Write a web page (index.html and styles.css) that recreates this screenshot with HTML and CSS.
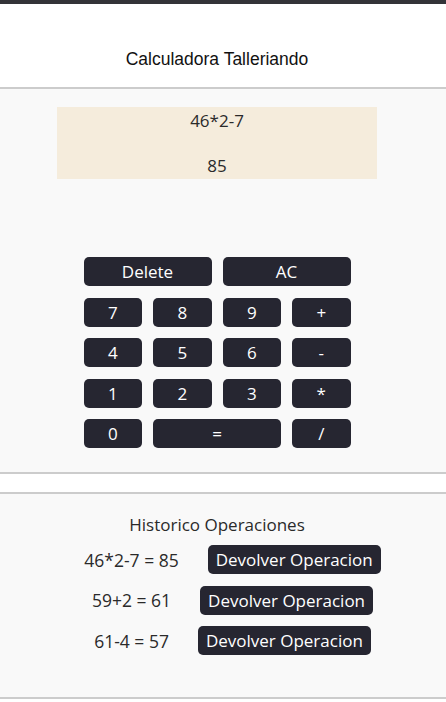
FILE: index.html
```html
<!DOCTYPE html>
<html lang="es">
<head>
<meta charset="utf-8">
<title>Calculadora Talleriando</title>
<link rel="stylesheet" href="styles.css">
</head>
<body>
<div class="topbar"></div>
<header class="header">
  <h1 class="title">Calculadora Talleriando</h1>
</header>
<section class="calc">
  <div class="inner">
    <div class="display">
      <div class="expr">46*2-7</div>
      <div class="result">85</div>
    </div>
    <div class="keypad">
      <button class="key span2">Delete</button>
      <button class="key span2">AC</button>
      <button class="key">7</button>
      <button class="key">8</button>
      <button class="key">9</button>
      <button class="key">+</button>
      <button class="key">4</button>
      <button class="key">5</button>
      <button class="key">6</button>
      <button class="key">-</button>
      <button class="key">1</button>
      <button class="key">2</button>
      <button class="key">3</button>
      <button class="key">*</button>
      <button class="key">0</button>
      <button class="key span2">=</button>
      <button class="key">/</button>
    </div>
  </div>
</section>
<div class="spacer"></div>
<section class="history">
  <div class="inner">
    <h2 class="hist-title">Historico Operaciones</h2>
    <div class="hist-list">
      <div class="hist-row"><span class="op">46*2-7 = 85</span><button class="back">Devolver Operacion</button></div>
      <div class="hist-row"><span class="op">59+2 = 61</span><button class="back">Devolver Operacion</button></div>
      <div class="hist-row"><span class="op">61-4 = 57</span><button class="back">Devolver Operacion</button></div>
    </div>
  </div>
</section>
</body>
</html>
```
FILE: styles.css
```css
html, body {
  margin: 0;
  padding: 0;
  background: #ffffff;
}
body {
  font-family: "Open Sans", "Noto Sans", sans-serif;
  color: #222;
}
.topbar {
  height: 4px;
  background: #333338;
}
.header {
  height: 85px;
  border-bottom: 2px solid #cccccc;
  display: flex;
  align-items: center;
  justify-content: center;
  padding-right: 12px;
  box-sizing: border-box;
}
.title {
  margin: 28px 0 0 0;
  font-family: "Comic Sans MS", "Liberation Sans", sans-serif;
  font-weight: normal;
  font-size: 17.5px;
  color: #111;
}
.calc {
  background: #f9f9f9;
  border-bottom: 2px solid #cccccc;
}
.inner {
  padding-right: 12px;
}
.calc .inner {
  padding-top: 18px;
  padding-bottom: 24px;
  display: flex;
  flex-direction: column;
  align-items: center;
}
.display {
  width: 320px;
  height: 72px;
  box-sizing: border-box;
  background: #f5ecdc;
  display: flex;
  flex-direction: column;
  justify-content: space-between;
  align-items: center;
  padding: 3px 0 2px;
  font-size: 17px;
  line-height: 22px;
  color: #2a2a2a;
}
.keypad {
  margin-top: 78px;
  display: grid;
  grid-template-columns: repeat(4, 58.5px);
  grid-auto-rows: 29px;
  column-gap: 11px;
  row-gap: 11.5px;
}
.key {
  background: #262631;
  color: #ffffff;
  border: none;
  border-radius: 5px;
  font-family: "Open Sans", "Noto Sans", sans-serif;
  font-size: 17px;
  padding: 0;
  line-height: 1;
}
.span2 {
  grid-column: span 2;
}
.spacer {
  height: 18px;
  background: #ffffff;
  border-bottom: 2px solid #cccccc;
}
.history {
  background: #f9f9f9;
  border-bottom: 2px solid #cccccc;
}
.history .inner {
  padding-top: 20px;
  padding-bottom: 42px;
}
.hist-title {
  margin: 0;
  text-align: center;
  font-weight: normal;
  font-size: 17px;
  line-height: 22px;
  color: #2a2a2a;
}
.hist-list {
  margin-top: 9px;
  display: flex;
  flex-direction: column;
  gap: 11.5px;
  padding-left: 31px;
}
.hist-row {
  display: flex;
  justify-content: center;
  align-items: center;
  gap: 29px;
}
.op {
  font-size: 17.5px;
  color: #2a2a2a;
}
.back {
  height: 29px;
  background: #262631;
  color: #ffffff;
  border: none;
  border-radius: 5px;
  font-family: "Open Sans", "Noto Sans", sans-serif;
  font-size: 17px;
  padding: 0 8px;
  line-height: 1;
}
```
